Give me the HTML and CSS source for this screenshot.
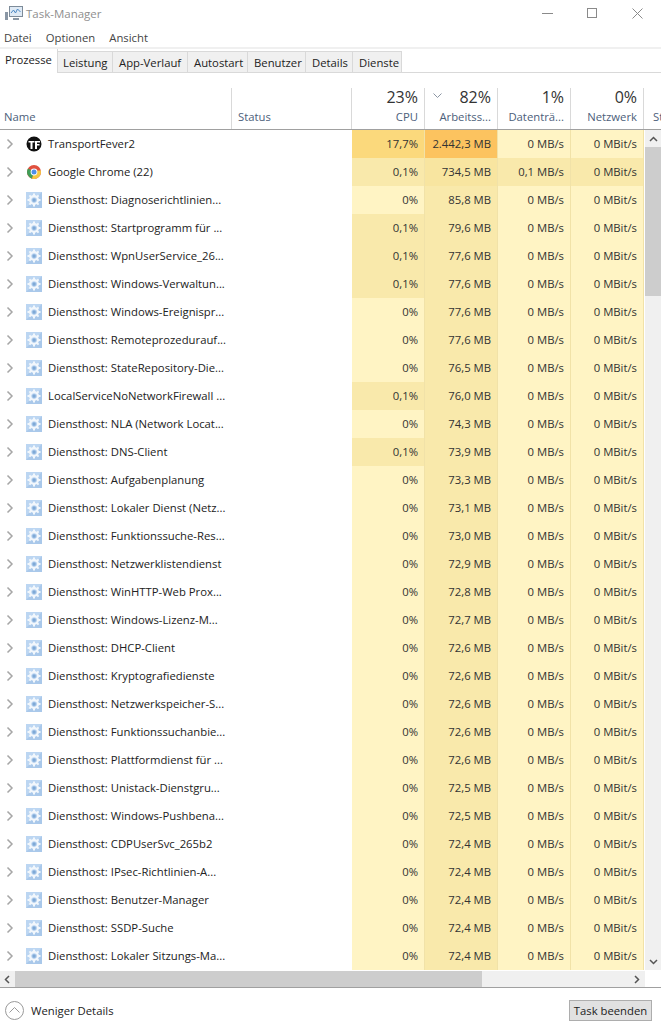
FILE: index.html
```html
<!DOCTYPE html>
<html lang="de">
<head>
<meta charset="utf-8">
<title>Task-Manager</title>
<link rel="stylesheet" href="styles.css">
</head>
<body>
<svg class="defs" width="0" height="0" aria-hidden="true">
  <defs>
    <symbol id="chev" viewBox="0 0 8 12"><path d="M1.5 1.5 6 6 1.5 10.500" fill="none" stroke="#a6a6a6" stroke-width="1.500"/></symbol>
    <symbol id="gear" viewBox="0 0 16 16">
      <rect width="16" height="16" fill="#a9c8ea"/>
      <path d="M0 0h16L0 16z" fill="#bcd6f2"/>
      <circle cx="8" cy="8" r="3.900" fill="none" stroke="#f2f7fc" stroke-width="2.200"/>
      <path d="M8 1.500v3M8 11.500v3M1.500 8h3M11.500 8h3M3.400 3.400l2.100 2.100M10.500 10.500l2.100 2.100M3.400 12.600l2.100-2.100M10.500 5.500l2.100-2.100" stroke="#f2f7fc" stroke-width="2"/>
      <circle cx="8" cy="8" r="1.700" fill="#7fa9d6"/>
    </symbol>
  </defs>
</svg>
<div class="window">
  <header class="titlebar">
    <svg class="appicon" viewBox="0 0 18 16" width="18" height="16"><path d="M0 7h3v8H0z" fill="#8a97a5"/><rect x="4.500" y="1.500" width="13" height="10" fill="#dfeaf5" stroke="#7d8b99"/><path d="M6 8l2.500-3 2 3 2-4 3 3" fill="none" stroke="#4b88c4"/><path d="M8 13h6v2H8z" fill="#8a97a5"/></svg>
    <span class="title">Task-Manager</span>
    <div class="winbtns">
      <span class="minimize"></span>
      <span class="maximize"></span>
      <svg class="close" viewBox="0 0 11 11" width="11" height="11"><path d="M.5.5l10 10M10.500.5l-10 10" stroke="#8a8a8a" fill="none"/></svg>
    </div>
  </header>
  <nav class="menu"><span>Datei</span><span>Optionen</span><span>Ansicht</span></nav>
  <div class="tabs">
    <span class="tab active t1">Prozesse</span>
    <span class="tab t2">Leistung</span>
    <span class="tab t3">App-Verlauf</span>
    <span class="tab t4">Autostart</span>
    <span class="tab t5">Benutzer</span>
    <span class="tab t6">Details</span>
    <span class="tab t7">Dienste</span>
  </div>

  <div class="head">
    <div class="hcol name"><span class="lab">Name</span></div>
    <div class="hcol status"><span class="lab">Status</span></div>
    <div class="hcol num"><span class="pct">23%</span><span class="lab">CPU</span></div>
    <div class="hcol num"><svg class="sort" viewBox="0 0 9 5" width="9" height="5"><path d="M.5.5l4 4 4-4" fill="none" stroke="#8b95a3"/></svg><span class="pct">82%</span><span class="lab">Arbeitss...</span></div>
    <div class="hcol num"><span class="pct">1%</span><span class="lab">Datenträ...</span></div>
    <div class="hcol num"><span class="pct">0%</span><span class="lab">Netzwerk</span></div>
    <div class="hcol more"><span class="lab">St</span></div>
  </div>

  <div class="body">
    <div class="rows">
      <div class="row"><svg class="chev"><use href="#chev"/></svg><svg class="icon" viewBox="0 0 16 16"><circle cx="8" cy="8" r="7.500" fill="#111"/><path d="M2.500 5h6v1.500H6.500V13H4.500V6.500h-2zM9 5h5v1.500h-3V8h2.500v1.500H11V13H9z" fill="#fff"/></svg><span class="pname">TransportFever2</span><span class="st"></span><span class="c h3">17,7%</span><span class="c h4">2.442,3 MB</span><span class="c h0">0 MB/s</span><span class="c h0">0 MBit/s</span></div>
      <div class="row"><svg class="chev"><use href="#chev"/></svg><svg class="icon" viewBox="0 0 16 16"><circle cx="8" cy="8" r="7" fill="#e0503f"/><path d="M8 8 2 4.500A7 7 0 0 0 6 14.700z" fill="#3f9e58"/><path d="M8 8 6 14.700A7 7 0 0 0 14.800 6.500H8z" fill="#f5c842"/><circle cx="8" cy="8" r="3.400" fill="#fff"/><circle cx="8" cy="8" r="2.500" fill="#4f8fe8"/></svg><span class="pname">Google Chrome (22)</span><span class="st"></span><span class="c h1">0,1%</span><span class="c h2">734,5 MB</span><span class="c h1">0,1 MB/s</span><span class="c h1">0 MBit/s</span></div>
      <div class="row"><svg class="chev"><use href="#chev"/></svg><svg class="icon"><use href="#gear"/></svg><span class="pname">Diensthost: Diagnoserichtlinien...</span><span class="st"></span><span class="c h0">0%</span><span class="c h1">85,8 MB</span><span class="c h0">0 MB/s</span><span class="c h0">0 MBit/s</span></div>
      <div class="row"><svg class="chev"><use href="#chev"/></svg><svg class="icon"><use href="#gear"/></svg><span class="pname">Diensthost: Startprogramm für ...</span><span class="st"></span><span class="c h1">0,1%</span><span class="c h1">79,6 MB</span><span class="c h0">0 MB/s</span><span class="c h0">0 MBit/s</span></div>
      <div class="row"><svg class="chev"><use href="#chev"/></svg><svg class="icon"><use href="#gear"/></svg><span class="pname">Diensthost: WpnUserService_26...</span><span class="st"></span><span class="c h1">0,1%</span><span class="c h1">77,6 MB</span><span class="c h0">0 MB/s</span><span class="c h0">0 MBit/s</span></div>
      <div class="row"><svg class="chev"><use href="#chev"/></svg><svg class="icon"><use href="#gear"/></svg><span class="pname">Diensthost: Windows-Verwaltun...</span><span class="st"></span><span class="c h1">0,1%</span><span class="c h1">77,6 MB</span><span class="c h0">0 MB/s</span><span class="c h0">0 MBit/s</span></div>
      <div class="row"><svg class="chev"><use href="#chev"/></svg><svg class="icon"><use href="#gear"/></svg><span class="pname">Diensthost: Windows-Ereignispr...</span><span class="st"></span><span class="c h0">0%</span><span class="c h1">77,6 MB</span><span class="c h0">0 MB/s</span><span class="c h0">0 MBit/s</span></div>
      <div class="row"><svg class="chev"><use href="#chev"/></svg><svg class="icon"><use href="#gear"/></svg><span class="pname">Diensthost: Remoteprozedurauf...</span><span class="st"></span><span class="c h0">0%</span><span class="c h1">77,6 MB</span><span class="c h0">0 MB/s</span><span class="c h0">0 MBit/s</span></div>
      <div class="row"><svg class="chev"><use href="#chev"/></svg><svg class="icon"><use href="#gear"/></svg><span class="pname">Diensthost: StateRepository-Die...</span><span class="st"></span><span class="c h0">0%</span><span class="c h1">76,5 MB</span><span class="c h0">0 MB/s</span><span class="c h0">0 MBit/s</span></div>
      <div class="row"><svg class="chev"><use href="#chev"/></svg><svg class="icon"><use href="#gear"/></svg><span class="pname">LocalServiceNoNetworkFirewall ...</span><span class="st"></span><span class="c h1">0,1%</span><span class="c h1">76,0 MB</span><span class="c h0">0 MB/s</span><span class="c h0">0 MBit/s</span></div>
      <div class="row"><svg class="chev"><use href="#chev"/></svg><svg class="icon"><use href="#gear"/></svg><span class="pname">Diensthost: NLA (Network Locat...</span><span class="st"></span><span class="c h0">0%</span><span class="c h1">74,3 MB</span><span class="c h0">0 MB/s</span><span class="c h0">0 MBit/s</span></div>
      <div class="row"><svg class="chev"><use href="#chev"/></svg><svg class="icon"><use href="#gear"/></svg><span class="pname">Diensthost: DNS-Client</span><span class="st"></span><span class="c h1">0,1%</span><span class="c h1">73,9 MB</span><span class="c h0">0 MB/s</span><span class="c h0">0 MBit/s</span></div>
      <div class="row"><svg class="chev"><use href="#chev"/></svg><svg class="icon"><use href="#gear"/></svg><span class="pname">Diensthost: Aufgabenplanung</span><span class="st"></span><span class="c h0">0%</span><span class="c h1">73,3 MB</span><span class="c h0">0 MB/s</span><span class="c h0">0 MBit/s</span></div>
      <div class="row"><svg class="chev"><use href="#chev"/></svg><svg class="icon"><use href="#gear"/></svg><span class="pname">Diensthost: Lokaler Dienst (Netz...</span><span class="st"></span><span class="c h0">0%</span><span class="c h1">73,1 MB</span><span class="c h0">0 MB/s</span><span class="c h0">0 MBit/s</span></div>
      <div class="row"><svg class="chev"><use href="#chev"/></svg><svg class="icon"><use href="#gear"/></svg><span class="pname">Diensthost: Funktionssuche-Res...</span><span class="st"></span><span class="c h0">0%</span><span class="c h1">73,0 MB</span><span class="c h0">0 MB/s</span><span class="c h0">0 MBit/s</span></div>
      <div class="row"><svg class="chev"><use href="#chev"/></svg><svg class="icon"><use href="#gear"/></svg><span class="pname">Diensthost: Netzwerklistendienst</span><span class="st"></span><span class="c h0">0%</span><span class="c h1">72,9 MB</span><span class="c h0">0 MB/s</span><span class="c h0">0 MBit/s</span></div>
      <div class="row"><svg class="chev"><use href="#chev"/></svg><svg class="icon"><use href="#gear"/></svg><span class="pname">Diensthost: WinHTTP-Web Prox...</span><span class="st"></span><span class="c h0">0%</span><span class="c h1">72,8 MB</span><span class="c h0">0 MB/s</span><span class="c h0">0 MBit/s</span></div>
      <div class="row"><svg class="chev"><use href="#chev"/></svg><svg class="icon"><use href="#gear"/></svg><span class="pname">Diensthost: Windows-Lizenz-M...</span><span class="st"></span><span class="c h0">0%</span><span class="c h1">72,7 MB</span><span class="c h0">0 MB/s</span><span class="c h0">0 MBit/s</span></div>
      <div class="row"><svg class="chev"><use href="#chev"/></svg><svg class="icon"><use href="#gear"/></svg><span class="pname">Diensthost: DHCP-Client</span><span class="st"></span><span class="c h0">0%</span><span class="c h1">72,6 MB</span><span class="c h0">0 MB/s</span><span class="c h0">0 MBit/s</span></div>
      <div class="row"><svg class="chev"><use href="#chev"/></svg><svg class="icon"><use href="#gear"/></svg><span class="pname">Diensthost: Kryptografiedienste</span><span class="st"></span><span class="c h0">0%</span><span class="c h1">72,6 MB</span><span class="c h0">0 MB/s</span><span class="c h0">0 MBit/s</span></div>
      <div class="row"><svg class="chev"><use href="#chev"/></svg><svg class="icon"><use href="#gear"/></svg><span class="pname">Diensthost: Netzwerkspeicher-S...</span><span class="st"></span><span class="c h0">0%</span><span class="c h1">72,6 MB</span><span class="c h0">0 MB/s</span><span class="c h0">0 MBit/s</span></div>
      <div class="row"><svg class="chev"><use href="#chev"/></svg><svg class="icon"><use href="#gear"/></svg><span class="pname">Diensthost: Funktionssuchanbie...</span><span class="st"></span><span class="c h0">0%</span><span class="c h1">72,6 MB</span><span class="c h0">0 MB/s</span><span class="c h0">0 MBit/s</span></div>
      <div class="row"><svg class="chev"><use href="#chev"/></svg><svg class="icon"><use href="#gear"/></svg><span class="pname">Diensthost: Plattformdienst für ...</span><span class="st"></span><span class="c h0">0%</span><span class="c h1">72,6 MB</span><span class="c h0">0 MB/s</span><span class="c h0">0 MBit/s</span></div>
      <div class="row"><svg class="chev"><use href="#chev"/></svg><svg class="icon"><use href="#gear"/></svg><span class="pname">Diensthost: Unistack-Dienstgru...</span><span class="st"></span><span class="c h0">0%</span><span class="c h1">72,5 MB</span><span class="c h0">0 MB/s</span><span class="c h0">0 MBit/s</span></div>
      <div class="row"><svg class="chev"><use href="#chev"/></svg><svg class="icon"><use href="#gear"/></svg><span class="pname">Diensthost: Windows-Pushbena...</span><span class="st"></span><span class="c h0">0%</span><span class="c h1">72,5 MB</span><span class="c h0">0 MB/s</span><span class="c h0">0 MBit/s</span></div>
      <div class="row"><svg class="chev"><use href="#chev"/></svg><svg class="icon"><use href="#gear"/></svg><span class="pname">Diensthost: CDPUserSvc_265b2</span><span class="st"></span><span class="c h0">0%</span><span class="c h1">72,4 MB</span><span class="c h0">0 MB/s</span><span class="c h0">0 MBit/s</span></div>
      <div class="row"><svg class="chev"><use href="#chev"/></svg><svg class="icon"><use href="#gear"/></svg><span class="pname">Diensthost: IPsec-Richtlinien-A...</span><span class="st"></span><span class="c h0">0%</span><span class="c h1">72,4 MB</span><span class="c h0">0 MB/s</span><span class="c h0">0 MBit/s</span></div>
      <div class="row"><svg class="chev"><use href="#chev"/></svg><svg class="icon"><use href="#gear"/></svg><span class="pname">Diensthost: Benutzer-Manager</span><span class="st"></span><span class="c h0">0%</span><span class="c h1">72,4 MB</span><span class="c h0">0 MB/s</span><span class="c h0">0 MBit/s</span></div>
      <div class="row"><svg class="chev"><use href="#chev"/></svg><svg class="icon"><use href="#gear"/></svg><span class="pname">Diensthost: SSDP-Suche</span><span class="st"></span><span class="c h0">0%</span><span class="c h1">72,4 MB</span><span class="c h0">0 MB/s</span><span class="c h0">0 MBit/s</span></div>
      <div class="row"><svg class="chev"><use href="#chev"/></svg><svg class="icon"><use href="#gear"/></svg><span class="pname">Diensthost: Lokaler Sitzungs-Ma...</span><span class="st"></span><span class="c h0">0%</span><span class="c h1">72,4 MB</span><span class="c h0">0 MB/s</span><span class="c h0">0 MBit/s</span></div>
    </div>
    <div class="vscroll">
      <svg class="arrow" viewBox="0 0 9 6" width="9" height="6"><path d="M1 5l3.500-3.500L8 5" fill="none" stroke="#555" stroke-width="1.500"/></svg>
      <div class="vthumb"></div>
      <div class="vtrack"></div>
      <svg class="arrow" viewBox="0 0 9 6" width="9" height="6"><path d="M1 1l3.500 3.500L8 1" fill="none" stroke="#555" stroke-width="1.500"/></svg>
    </div>
  </div>

  <div class="hscroll">
    <div class="hbar">
      <svg class="harrow" viewBox="0 0 6 9" width="6" height="9"><path d="M5 1 1.500 4.500 5 8" fill="none" stroke="#555" stroke-width="1.500"/></svg>
      <div class="hthumb"></div>
      <div class="htrack"></div>
      <svg class="harrow" viewBox="0 0 6 9" width="6" height="9"><path d="M1 1l3.500 3.500L1 8" fill="none" stroke="#555" stroke-width="1.500"/></svg>
    </div>
    <div class="corner"></div>
  </div>

  <footer class="footer">
    <div class="less">
      <svg class="lessicon" viewBox="0 0 19 19" width="19" height="19"><circle cx="9.500" cy="9.500" r="9" fill="#fff" stroke="#9a9a9a"/><path d="M4.500 11.500l5-5 5 5" fill="none" stroke="#9a9a9a"/></svg>
      <span>Weniger Details</span>
    </div>
    <button class="endtask">Task beenden</button>
  </footer>
</div>
</body>
</html>
```
FILE: styles.css
```css
* { box-sizing: border-box; }
html, body { margin: 0; padding: 0; }
body {
  width: 661px;
  height: 1033px;
  overflow: hidden;
  background: #fff;
  font-family: "Open Sans", "Noto Sans", sans-serif;
  font-size: 11.3px;
  color: #1f1f1f;
}
.defs { position: absolute; }
.window { display: flex; flex-direction: column; width: 661px; height: 1033px; }

.titlebar { display: flex; align-items: center; height: 26px; padding-left: 5px; }
.appicon { margin-right: 3px; }
.title { color: #8f8f8f; font-size: 11.5px; }
.winbtns { margin-left: auto; display: flex; align-items: center; }
.minimize { width: 11px; height: 1px; background: #8a8a8a; margin-right: 34px; }
.maximize { width: 10px; height: 10px; border: 1px solid #8a8a8a; margin-right: 35px; }
.close { margin-right: 18px; }

.menu { display: flex; gap: 14px; height: 23px; padding: 2px 0 0 4px; align-items: center; color: #444; border-bottom: 2px solid #f0f0f0; }
.menu span { line-height: 19px; }

.tabs { display: flex; align-items: flex-end; height: 24px; border-bottom: 1px solid #d9d9d9; }
.tab { display: flex; align-items: center; height: 21px; padding-left: 6px; background: #f0f0f0; border: 1px solid #d9d9d9; border-left: 0; border-bottom: 0; color: #222; white-space: nowrap; }
.tab.active { height: 24px; padding-left: 5px; background: #fff; margin-bottom: -1px; padding-bottom: 3px; border-top: 0; }
.t1 { width: 58px; }
.t2 { width: 55px; padding-left: 5px; }
.t3 { width: 75px; }
.t4 { width: 60px; }
.t5 { width: 58px; }
.t6 { width: 47px; }
.t7 { width: 49px; }

.head { display: flex; height: 42px; margin-top: 15px; border-bottom: 1px solid #a0a0a0; flex: none; }
.hcol { display: flex; flex-direction: column; justify-content: flex-end; position: relative; border-right: 1px solid #d9d9d9; flex: none; }
.lab { color: #4c607a; line-height: 22px; padding-bottom: 1px; white-space: nowrap; }
.name { width: 232px; padding-left: 4px; }
.status { width: 120px; padding-left: 6px; }
.num { width: 73px; text-align: right; padding-right: 6px; }
.more { width: 17px; padding-left: 9px; border-right: 0; }
.pct { font-size: 16px; line-height: 18px; color: #333; }
.sort { position: absolute; left: 8px; top: 5px; }

.body { display: flex; flex: none; height: 840px; }
.rows { width: 645px; flex: none; }
.row { display: flex; height: 28px; align-items: center; }
.chev { width: 8px; height: 12px; margin-left: 6px; flex: none; }
.icon { width: 16px; height: 16px; margin-left: 12px; flex: none; }
.pname { width: 184px; margin-left: 6px; padding-bottom: 1px; flex: none; white-space: nowrap; color: #222; }
.st { width: 120px; flex: none; }
.c { width: 73px; height: 28px; line-height: 27px; text-align: right; padding-right: 6px; flex: none; border-right: 1px solid #f1e2a8; color: #333; white-space: nowrap; }
.h0 { background: #fff4c4; }
.h1 { background: #f9e9ab; }
.h2 { background: #f8e5a0; }
.h3 { background: #fbd97c; }
.h4 { background: #fcc35f; }

.vscroll { width: 16px; display: flex; flex-direction: column; align-items: center; background: #f0f0f0; flex: none; }
.arrow { margin: 6px 0 5px; flex: none; }
.vthumb { width: 100%; height: 149px; background: #cdcdcd; flex: none; }
.vtrack { flex: 1; }

.hscroll { display: flex; height: 17px; margin-top: 1px; flex: none; border-bottom: 1px solid #a0a0a0; }
.hbar { display: flex; align-items: center; width: 645px; background: #f0f0f0; }
.harrow { margin: 0 5px 0 4px; flex: none; }
.hthumb { height: 100%; width: 467px; background: #cdcdcd; flex: none; }
.htrack { flex: 1; }
.corner { width: 16px; }

.footer { display: flex; align-items: center; justify-content: space-between; flex: 1; padding: 0 9px 1px 5px; }
.less { display: flex; align-items: center; gap: 7px; color: #222; }
.endtask { width: 83px; height: 21px; padding: 0; font: inherit; color: #222; background: #e1e1e1; border: 1px solid #adadad; }
```
